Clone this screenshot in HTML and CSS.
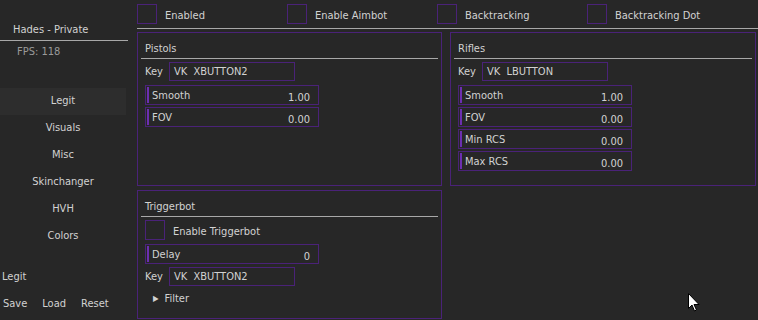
FILE: index.html
```html
<!DOCTYPE html>
<html lang="en">
<head>
    <meta charset="UTF-8">
    <title>Hades - Private</title>
    <link rel="stylesheet" href="styles.css">
</head>
<body>
    <div class="sidebar">
        <div class="brand">Hades - Private</div>
        <div class="fps">FPS: 118</div>
        <nav class="tabs">
            <div class="tab active">Legit</div>
            <div class="tab">Visuals</div>
            <div class="tab">Misc</div>
            <div class="tab">Skinchanger</div>
            <div class="tab">HVH</div>
            <div class="tab">Colors</div>
        </nav>
        <div class="config-name">Legit</div>
        <div class="config-actions">
            <span>Save</span>
            <span>Load</span>
            <span>Reset</span>
        </div>
    </div>

    <div class="main">
        <div class="toggles">
            <label class="toggle"><span class="check"></span><span class="label">Enabled</span></label>
            <label class="toggle"><span class="check"></span><span class="label">Enable Aimbot</span></label>
            <label class="toggle"><span class="check"></span><span class="label">Backtracking</span></label>
            <label class="toggle"><span class="check"></span><span class="label">Backtracking Dot</span></label>
        </div>

        <div class="panels">
            <div class="panel">
                <div class="panel-title">Pistols</div>
                <div class="key-row"><span>Key</span><div class="key-box">VK&nbsp; XBUTTON2</div></div>
                <div class="slider"><span>Smooth</span><span class="value">1.00</span></div>
                <div class="slider"><span>FOV</span><span class="value">0.00</span></div>
            </div>

            <div class="panel">
                <div class="panel-title">Rifles</div>
                <div class="key-row"><span>Key</span><div class="key-box">VK&nbsp; LBUTTON</div></div>
                <div class="slider"><span>Smooth</span><span class="value">1.00</span></div>
                <div class="slider"><span>FOV</span><span class="value">0.00</span></div>
                <div class="slider"><span>Min RCS</span><span class="value">0.00</span></div>
                <div class="slider"><span>Max RCS</span><span class="value">0.00</span></div>
            </div>

            <div class="panel">
                <div class="panel-title">Triggerbot</div>
                <label class="toggle inner"><span class="check"></span><span class="label">Enable Triggerbot</span></label>
                <div class="slider"><span>Delay</span><span class="value">0</span></div>
                <div class="key-row"><span>Key</span><div class="key-box">VK&nbsp; XBUTTON2</div></div>
                <div class="tree"><span class="arrow">&#9654;</span>Filter</div>
            </div>
        </div>
    </div>

    <svg class="cursor" width="12" height="19" viewBox="0 0 12 19">
        <path d="M0.5 0.5 L0.5 15.5 L4 12 L6.5 18 L8.5 17 L6 11.5 L11 11.5 Z" fill="#fff" stroke="#000" stroke-width="1"/>
    </svg>
</body>
</html>
```

FILE: styles.css
```css
body {
    margin: 0;
    width: 758px;
    height: 320px;
    overflow: hidden;
    display: flex;
    background-color: #272727;
    color: #d2d2d2;
    font-family: 'DejaVu Sans Condensed', 'DejaVu Sans', sans-serif;
    font-size: 11px;
    position: relative;
}

.sidebar {
    width: 137px;
    flex-shrink: 0;
    display: flex;
    flex-direction: column;
}

.brand {
    margin-top: 23px;
    width: 128px;
    padding-left: 13px;
    box-sizing: border-box;
    height: 18px;
    border-bottom: 1px solid #a8a8a8;
}

.fps {
    margin-top: 4px;
    padding-left: 17px;
    color: #9a9a9a;
}

.tabs {
    margin-top: 30px;
    width: 126px;
}

.tab {
    height: 27px;
    line-height: 25px;
    text-align: center;
}

.tab.active {
    background-color: #2d2d2d;
}

.config-name {
    margin-top: 20px;
    padding-left: 2px;
}

.config-actions {
    margin-top: 14px;
    padding-left: 3px;
    display: flex;
    gap: 15px;
}

.main {
    flex: 1;
}

.toggles {
    height: 28px;
    border-bottom: 1px solid #a8a8a8;
    display: flex;
    align-items: flex-start;
}

.toggle {
    width: 150px;
    display: flex;
    align-items: center;
    gap: 8px;
    margin-top: 4px;
}

.toggle .label {
    padding-top: 2px;
}

.check {
    width: 18px;
    height: 18px;
    border: 1px solid #4a2278;
    display: inline-block;
}

.panels {
    margin-top: 3px;
    display: grid;
    grid-template-columns: 305px 306px;
    grid-template-rows: 154px 129px;
    column-gap: 8px;
    row-gap: 4px;
}

.panel {
    border: 1px solid #4a2278;
    padding: 0 3px;
    box-sizing: border-box;
}

.panel-title {
    height: 25px;
    line-height: 32px;
    padding-left: 4px;
    border-bottom: 1px solid #a8a8a8;
}

.key-row {
    margin-top: 3px;
    padding-left: 4px;
    display: flex;
    align-items: center;
    gap: 6px;
}

.key-box {
    width: 120px;
    height: 17px;
    line-height: 17px;
    border: 1px solid #4a2278;
    padding-left: 4px;
}

.slider {
    margin-left: 4px;
    width: 174px;
    height: 20px;
    border: 1px solid #4a2278;
    box-sizing: border-box;
    display: flex;
    justify-content: space-between;
    align-items: center;
    padding: 0 8px 0 6px;
    margin-bottom: 2px;
    position: relative;
}

.slider::before {
    content: '';
    position: absolute;
    left: 1px;
    top: 1px;
    bottom: 1px;
    width: 2px;
    background-color: #6c2fb0;
}

.slider .value {
    padding-top: 4px;
}

.key-row + .slider {
    margin-top: 4px;
}

.toggle.inner {
    margin: 3px 0 4px 4px;
    width: auto;
}

.slider + .key-row {
    margin-top: 3px;
}

.tree {
    margin-top: 6px;
    padding-left: 12px;
    display: flex;
    align-items: center;
    gap: 6px;
}

.arrow {
    font-size: 8px;
}

.cursor {
    position: absolute;
    left: 688px;
    top: 293px;
}
```
